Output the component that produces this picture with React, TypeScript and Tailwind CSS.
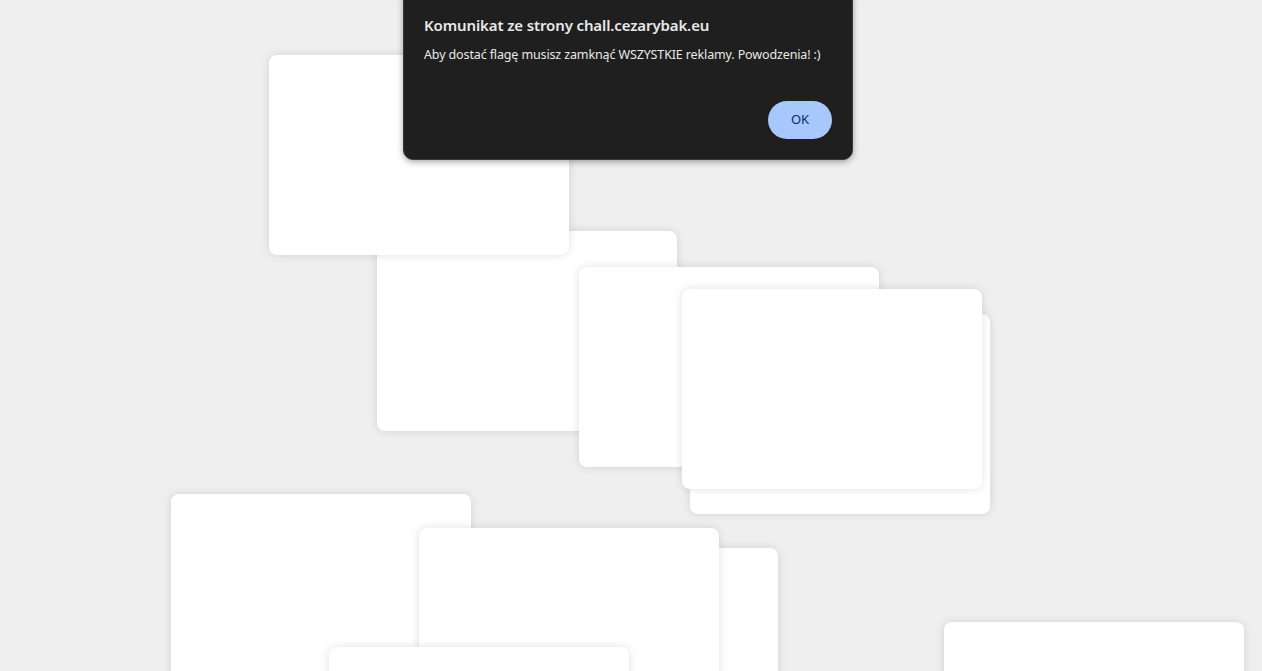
import React from "react";

const cards: { left: number; top: number }[] = [
  // back to front
  { left: 377, top: 231 },
  { left: 269, top: 55 },
  { left: 579, top: 267 },
  { left: 690, top: 314 },
  { left: 682, top: 289 },
  { left: 171, top: 494 },
  { left: 478, top: 548 },
  { left: 419, top: 528 },
  { left: 329, top: 647 },
  { left: 944, top: 622 },
];

export default function App() {
  return (
    <div
      className="relative w-[1262px] h-[671px] overflow-hidden bg-[#efefef]"
      style={{ fontFamily: '"Noto Sans", "Open Sans", sans-serif' }}
    >
      {cards.map((c, i) => (
        <div
          key={i}
          className="absolute w-[300px] h-[200px] bg-white rounded-[8px] shadow-[0_0_10px_rgba(0,0,0,0.12)]"
          style={{ left: c.left, top: c.top }}
        />
      ))}
      <div className="absolute left-[403px] top-[-12px] w-[450px] h-[172px] bg-[#1f1f1f] rounded-[10px] border border-[#3a3a3a] shadow-[0_2px_6px_rgba(0,0,0,0.35)] flex flex-col pt-[26px] px-[20px] pb-[20px]">
        <div className="text-[15px] font-semibold text-[#e8e8e8] leading-[20px] tracking-[-0.12px]">
          Komunikat ze strony chall.cezarybak.eu
        </div>
        <div className="mt-[11px] text-[12.5px] text-[#e8e8e8] leading-[18px] tracking-[-0.13px]">
          Aby dostać flagę musisz zamknąć WSZYSTKIE reklamy. Powodzenia! :)
        </div>
        <div className="mt-auto flex justify-end">
          <button className="w-[64px] h-[38px] rounded-full bg-[#a8c7fa] text-[#062e6f] text-[13px] font-normal">
            OK
          </button>
        </div>
      </div>
    </div>
  );
}
